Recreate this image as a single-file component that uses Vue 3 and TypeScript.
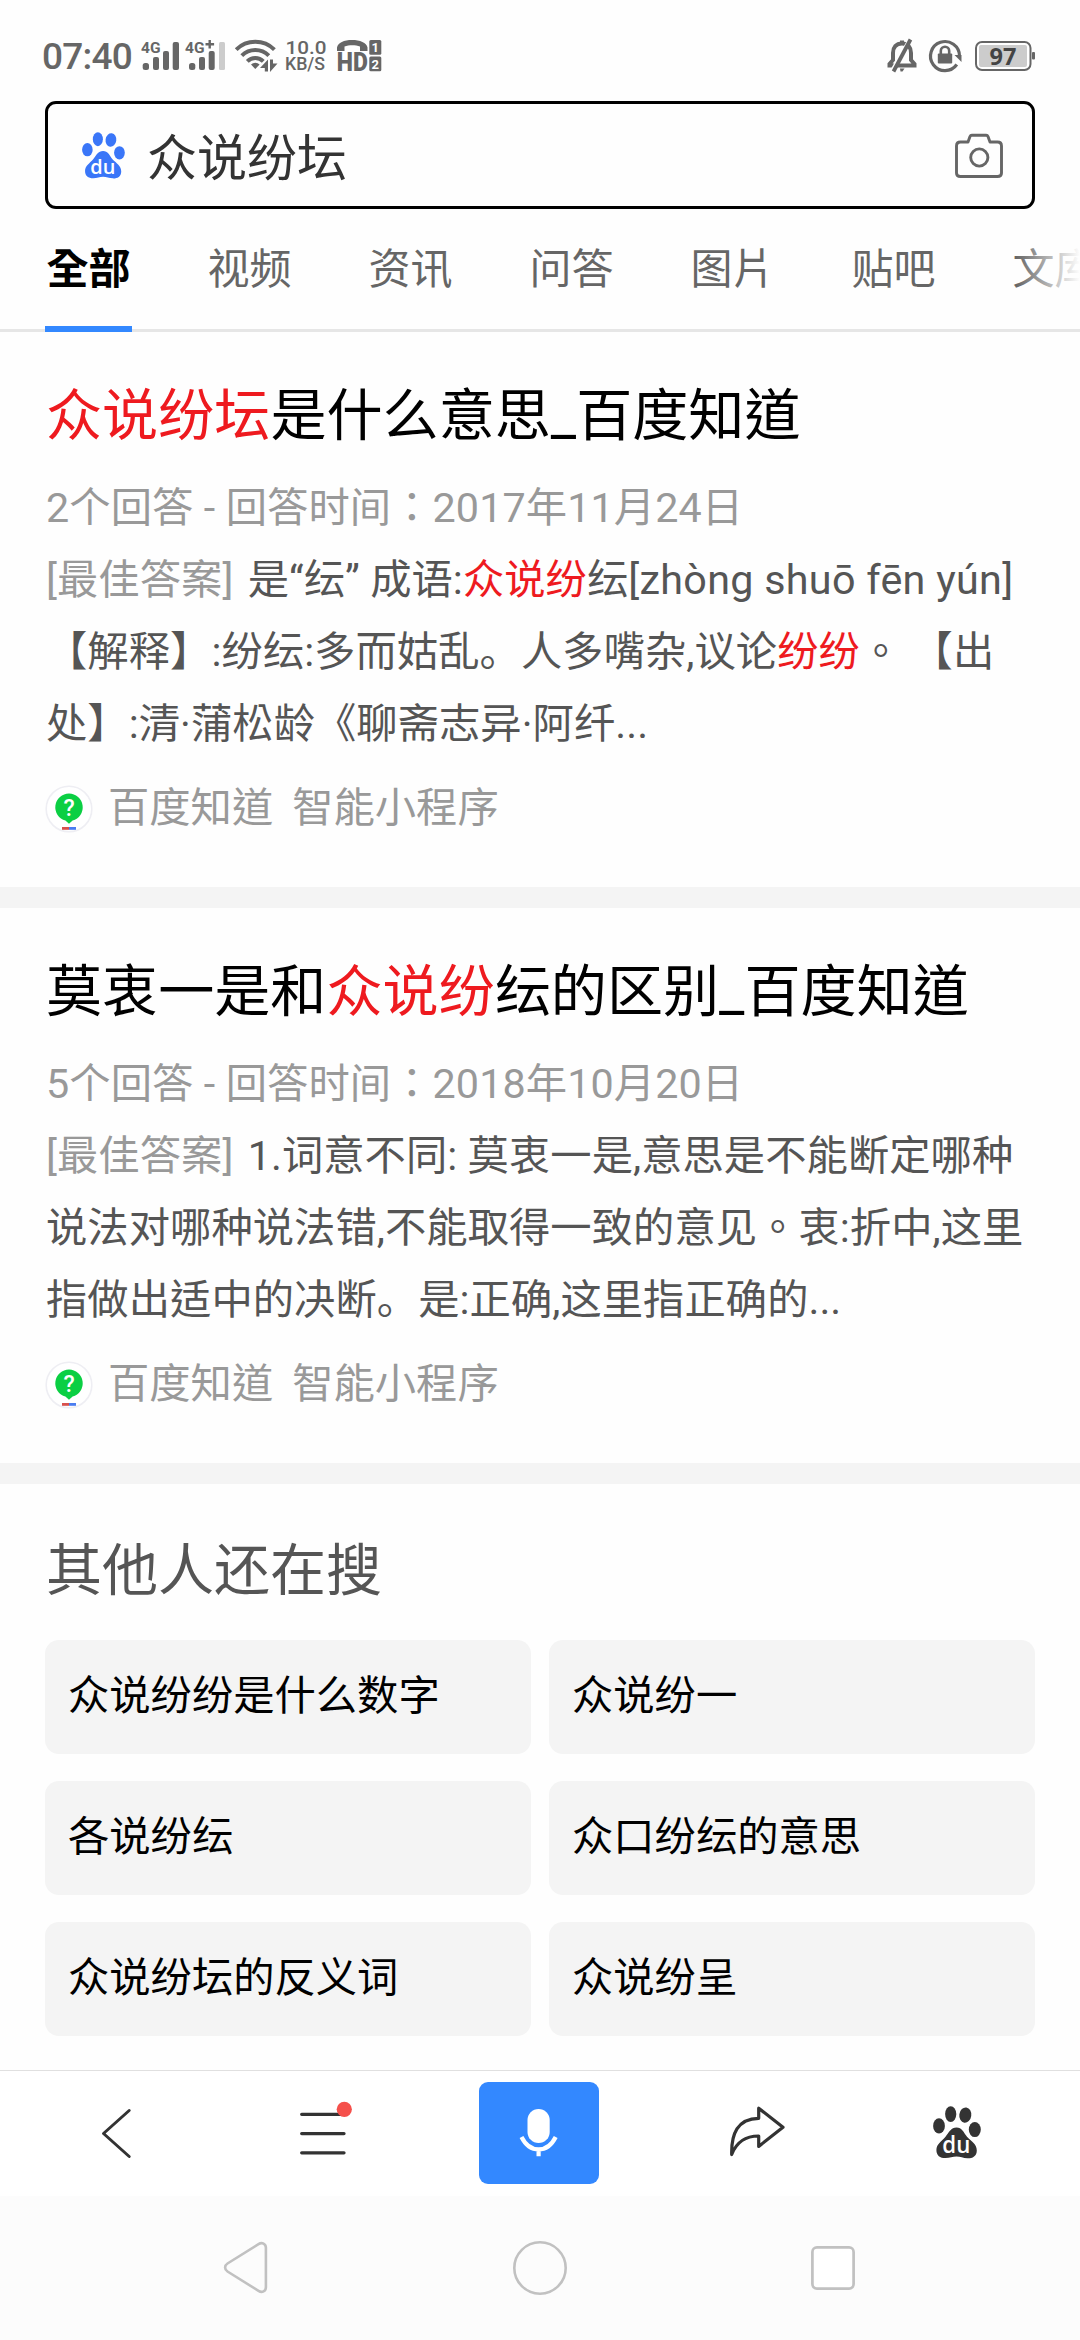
<script setup lang="ts">
interface Part {
  text: string
  tone?: 'hit' | 'soft' | 'sc' | 'jp' | 'latin'
}
interface Result {
  title: Part[]
  meta: string
  lines: Part[][]
}

const query = '众说纷坛'
const tabs: string[] = ['全部', '视频', '资讯', '问答', '图片', '贴吧', '文库']

const results: Result[] = [
  {
    title: [{ text: '众说纷坛', tone: 'hit' }, { text: '是什么意思_百度知道' }],
    meta: '2个回答 - 回答时间：2017年11月24日',
    lines: [
      [
        { text: '[最佳答案]', tone: 'soft' },
        { text: ' 是“纭” 成语:' },
        { text: '众说纷', tone: 'hit' },
        { text: '纭' },
        { text: '[zhòng shuō fēn yún]', tone: 'latin' },
      ],
      [
        { text: '【解释】:纷纭:多而姑' },
        { text: '乱。', tone: 'sc' },
        { text: '人多嘴杂,议论' },
        { text: '纷纷', tone: 'hit' },
        { text: '。 【出' },
      ],
      [{ text: '处', tone: 'jp' }, { text: '】:清·蒲松龄《聊斋志异·阿纤...' }],
    ],
  },
  {
    title: [
      { text: '莫衷一是和' },
      { text: '众说纷', tone: 'hit' },
      { text: '纭的区别_百度知道' },
    ],
    meta: '5个回答 - 回答时间：2018年10月20日',
    lines: [
      [
        { text: '[最佳答案]', tone: 'soft' },
        { text: ' 1.词意不同: 莫衷一是,意思是不能断定哪种' },
      ],
      [{ text: '说法对哪种说法错,不能取得一致的意见。衷:折中,这里' }],
      [
        { text: '指做出适中的决' },
        { text: '断。', tone: 'sc' },
        { text: '是:正确,这里指正确的...' },
      ],
    ],
  },
]

const related: string[] = [
  '众说纷纷是什么数字',
  '众说纷一',
  '各说纷纭',
  '众口纷纭的意思',
  '众说纷坛的反义词',
  '众说纷呈',
]
</script>

<template>
  <div class="screen">
    <header class="status">
      <span class="clock">07:40</span>
      <svg class="signal" width="88" height="34" viewBox="140 38 88 34">
        <g fill="#666">
          <text x="141" y="51.6" class="net" textLength="19.500" lengthAdjust="spacingAndGlyphs">4G</text>
          <rect x="142.7" y="62" width="6.3" height="7" rx="2.5" />
          <rect x="153" y="56" width="6" height="13" rx="2" />
          <rect x="163" y="50" width="6" height="19" rx="2" />
          <rect x="172.7" y="41" width="6.3" height="28" rx="2" />
          <text x="185" y="51.6" class="net" textLength="19.500" lengthAdjust="spacingAndGlyphs">4G</text>
          <path d="M209.7 39v8.4M205.500 43.2h8.600" stroke="#666" stroke-width="2.4" />
          <rect x="189" y="62" width="6.3" height="7" rx="2.5" />
          <rect x="199" y="56" width="6" height="13" rx="2" />
          <rect x="208.7" y="50" width="6" height="19" rx="2" />
        </g>
        <rect x="219" y="41" width="6" height="28" rx="1.5" fill="#ccc" />
      </svg>
      <svg class="wifi" width="46" height="34" viewBox="233 39 46 34">
        <g fill="none" stroke="#666" stroke-width="4">
          <path d="M236.2 49.6a27.2 27.2 0 0 1 38.2 0" />
          <path d="M241.8 55.6a19.2 19.2 0 0 1 27 0" />
          <path d="M247.3 61.4a11.3 11.3 0 0 1 16 0" />
        </g>
        <path d="M251 64.5a6.4 6.4 0 0 1 8.600 0L255.3 69z" fill="#666" />
        <path d="M260 68l8-8.4V71.500h-3.200V68zM270 59.500h3v4h4.500L270 72z" fill="#666" />
      </svg>
      <svg class="rate" width="42" height="34" viewBox="285 38 42 34">
        <g fill="#666" class="rate-text">
          <text x="285.500" y="53.400" textLength="41" lengthAdjust="spacingAndGlyphs">10.0</text>
          <text x="285" y="69.400" textLength="40" lengthAdjust="spacingAndGlyphs">KB/S</text>
        </g>
      </svg>
      <svg class="hd" width="46" height="34" viewBox="336 38 46 34">
        <path d="M337 50v-3.500C338 41.500 344 39 352 39s14.500 2.500 15.500 7.500V50h-7.500v-4.600c-4.500-1.700-11-1.700-15.500 0V50z" fill="#666" />
        <text x="336.800" y="70" class="hd-text" textLength="31" lengthAdjust="spacingAndGlyphs">HD</text>
        <rect x="369.300" y="39" width="12" height="14.800" rx="1.500" fill="#666" />
        <rect x="369.300" y="55.600" width="12" height="14.600" rx="1.500" fill="#666" />
        <text x="375.300" y="51" class="sim">1</text>
        <text x="375.300" y="67.500" class="sim">2</text>
      </svg>
      <svg class="bell" width="32" height="34" viewBox="887 38 32 34">
        <path d="M890.500 64.500v-1.500l3.500-4V52c0-5.500 3-9.500 9-9.500s9 4 9 9.500v7l3.500 4v1.500zM903 42v-2.500" fill="none" stroke="#666" stroke-width="4" />
        <path d="M909.500 40L893 69" stroke="#fff" stroke-width="3" />
        <path d="M911.500 38.500L894.500 70.500" stroke="#666" stroke-width="3.800" />
        <path d="M901 67.500h4.500l-2 3h-2z" fill="#666" />
      </svg>
      <svg class="lock" width="34" height="34" viewBox="929 38 34 34">
        <path d="M957.800 63.500A14.500 14.500 0 1 1 960.500 55" fill="none" stroke="#666" stroke-width="3.200" />
        <path d="M955.500 54h7v7z" fill="#666" />
        <rect x="938.800" y="52.500" width="14.400" height="10" rx="1" fill="#666" />
        <path d="M941.800 53v-3a4.200 4.200 0 0 1 8.400 0v3" fill="none" stroke="#666" stroke-width="2.600" />
      </svg>
      <svg class="battery" width="62" height="32" viewBox="974 39 62 32">
        <rect x="976" y="41" width="54.500" height="28" rx="6" fill="#fff" stroke="#666" stroke-width="2" />
        <rect x="979" y="44" width="48" height="22" rx="2" fill="#ccc" />
        <rect x="1032" y="51" width="3" height="7.500" rx="1" fill="#666" />
        <text x="1003" y="63.800" class="charge">97</text>
      </svg>
    </header>

    <div class="search">
      <svg class="logo" width="43" height="47" viewBox="0 0 48 52.500" preserveAspectRatio="none">
        <g fill="#3a76f8">
          <ellipse cx="6" cy="19.700" rx="5.900" ry="7.500" />
          <ellipse cx="17.700" cy="8" rx="5.600" ry="7.800" />
          <ellipse cx="32.300" cy="9" rx="6" ry="7.600" transform="rotate(8 32.300 9)" />
          <ellipse cx="41.800" cy="23.300" rx="6" ry="7.500" />
          <path d="M23.500 21.300C29 21.300 30.500 26 34 30.500 38.500 35 43.800 38 43.800 44c0 6-4.800 8-9.300 7.800C30 51.500 27.500 50 23.500 50s-6.500 1.600-11 1.600C7 51.600 3.400 49 3.400 43.500c0-5.500 5.100-8.500 9.100-13C16 26 18 21.300 23.500 21.300z" />
        </g>
        <text x="9.300" y="46.700" class="du" textLength="28" lengthAdjust="spacingAndGlyphs">du</text>
      </svg>
      <span class="query">{{ query }}</span>
      <svg class="camera" width="50" height="46" viewBox="953.500 133 50 46">
        <g fill="none" stroke="#666" stroke-width="2.900" stroke-linejoin="round">
          <path d="M960 142h7.500l2-5.500q.5-1.200 1.800-1.200h14.400q1.300 0 1.800 1.200l2 5.500h7.500q4 0 4 4v27q0 3.500-4 3.500h-37q-4 0-4-3.500v-27q0-4 4-4z" />
          <circle cx="978.800" cy="157.500" r="8.600" />
        </g>
      </svg>
    </div>

    <nav class="tabs">
      <span v-for="(tab, i) in tabs" :key="tab" class="tab" :class="{ active: i === 0 }">{{ tab }}</span>
      <i class="fade"></i>
    </nav>

    <main>
      <article v-for="(r, i) in results" :key="i" class="result">
        <h2 class="title">
          <span v-for="(p, k) in r.title" :key="k" :class="p.tone">{{ p.text }}</span>
        </h2>
        <p class="meta">{{ r.meta }}</p>
        <p v-for="(line, n) in r.lines" :key="n" class="line">
          <span v-for="(p, k) in line" :key="k" :class="p.tone">{{ p.text }}</span>
        </p>
        <div class="source">
          <svg width="48" height="48" viewBox="0 0 48 48">
            <circle cx="24" cy="24" r="22.800" fill="#fff" stroke="#eeeef3" stroke-width="1.600" />
            <path d="M24 8.500a13.800 13.800 0 0 1 3.600 27.100L24 38.800l-3.600-3.200A13.800 13.800 0 0 1 24 8.500z" fill="#0bcf43" />
            <text x="24" y="30.500" class="mark">?</text>
            <rect x="17" y="42" width="7" height="2.800" fill="#d8504c" />
            <rect x="24" y="42" width="7" height="2.800" fill="#4a7cf0" />
          </svg>
          <span class="site">百度知道</span>
          <span class="site">智能小程序</span>
        </div>
      </article>

      <section class="related">
        <h3>其他人还在搜</h3>
        <div class="grid">
          <a v-for="item in related" :key="item" class="pill">{{ item }}</a>
        </div>
      </section>
    </main>

    <footer class="toolbar">
      <svg width="34" height="54" viewBox="99 2105 34 54">
        <path d="M129.200 2109.500L103.500 2132.500l25.700 23" fill="none" stroke="#333" stroke-width="3" stroke-linecap="round" stroke-linejoin="round" />
      </svg>
      <svg class="menu" width="56" height="60" viewBox="298 2099 56 60">
        <path d="M301.700 2114.300h42.300M301.700 2133.600h42.300M301.700 2152.800h42.300" stroke="#333" stroke-width="3.300" stroke-linecap="round" />
        <circle cx="344.300" cy="2109.300" r="7.600" fill="#f5504b" />
      </svg>
      <button class="mic" type="button">
        <svg width="42" height="52" viewBox="518 2107 42 52">
          <rect x="527.500" y="2109" width="22.200" height="34" rx="11.100" fill="#fff" />
          <path d="M521.500 2137c4 8 10.500 12.400 17.100 12.400s13.100-4.400 17.100-12.400M538.600 2149v7.300" fill="none" stroke="#fff" stroke-width="4.200" />
        </svg>
      </button>
      <svg class="share" width="58" height="56" viewBox="728 2106 58 56">
        <path d="M758.700 2109.200l24.300 19-24.300 19.200v-10.400c-13 0-22 5.500-27 18.500-.5-20 5.500-36 27-36.200z" fill="none" stroke="#333" stroke-width="3.200" stroke-linejoin="round" />
      </svg>
      <svg class="paw" width="48" height="53" viewBox="0 0 48 52.500" preserveAspectRatio="none">
        <g fill="#333">
          <ellipse cx="6" cy="19.700" rx="5.900" ry="7.500" />
          <ellipse cx="17.700" cy="8" rx="5.600" ry="7.800" />
          <ellipse cx="32.300" cy="9" rx="6" ry="7.600" transform="rotate(8 32.300 9)" />
          <ellipse cx="41.800" cy="23.300" rx="6" ry="7.500" />
          <path d="M23.500 21.300C29 21.300 30.500 26 34 30.500 38.500 35 43.800 38 43.800 44c0 6-4.800 8-9.300 7.800C30 51.500 27.500 50 23.500 50s-6.500 1.600-11 1.600C7 51.600 3.400 49 3.400 43.500c0-5.500 5.100-8.500 9.100-13C16 26 18 21.300 23.500 21.300z" />
        </g>
        <text x="9.300" y="46.700" class="du" textLength="28" lengthAdjust="spacingAndGlyphs">du</text>
      </svg>
    </footer>

    <div class="system">
      <svg width="48" height="56" viewBox="222 2240 48 56">
        <path d="M258.500 2244.200c3.500-2.200 7.400-.6 7.400 3.600v39.400c0 4.200-3.900 5.800-7.400 3.600l-31-19.300c-3.200-2-3.200-6 0-8z" fill="none" stroke="#c1c1c1" stroke-width="2.600" />
      </svg>
      <svg width="56" height="56" viewBox="0 0 56 56">
        <circle cx="28" cy="28" r="25.700" fill="none" stroke="#c1c1c1" stroke-width="2.600" />
      </svg>
      <svg width="46" height="46" viewBox="0 0 46 46">
        <rect x="2.400" y="2.400" width="41.200" height="41.200" rx="4.500" fill="#fff" stroke="#c1c1c1" stroke-width="2.700" />
      </svg>
    </div>
  </div>
</template>

<style>
body {
  margin: 0;
  background: #fff;
}
</style>

<style scoped>
.screen {
  display: flex;
  flex-direction: column;
  width: 1080px;
  height: 2340px;
  overflow: hidden;
  background: #fefefe;
  font-family: Roboto, 'Noto Sans CJK TC', sans-serif;
  font-size: 41.3px;
  color: #555;
}
svg {
  display: block;
  flex: none;
  overflow: visible;
}
h2,
h3,
p {
  margin: 0;
  font-weight: 400;
}

.status {
  display: flex;
  align-items: center;
  height: 101px;
  box-sizing: border-box;
  padding: 10px 44px 0 42px;
}
.clock {
  width: 98px;
  padding-top: 2px;
  font-size: 37px;
  font-weight: 500;
  line-height: 40px;
  letter-spacing: -0.8px;
  color: #666;
  white-space: nowrap;
}
.net {
  font-size: 15.5px;
  font-weight: 700;
}
.wifi {
  margin-left: 5px;
}
.rate {
  margin-left: 6px;
}
.rate-text {
  font-size: 19px;
  font-weight: 500;
}
.hd {
  margin-left: 9px;
}
.hd-text {
  font-size: 25px;
  font-weight: 900;
  fill: #666;
}
.sim {
  font-size: 13px;
  font-weight: 700;
  fill: #fff;
  text-anchor: middle;
}
.bell {
  margin-left: auto;
}
.lock {
  margin-left: 10px;
}
.battery {
  margin-left: 12px;
}
.charge {
  font-family: 'Noto Sans', sans-serif;
  font-size: 23.5px;
  font-weight: 700;
  fill: #444;
  text-anchor: middle;
}

.search {
  display: flex;
  align-items: center;
  height: 108px;
  margin: 0 45px;
  box-sizing: border-box;
  padding: 0 28px 0 34px;
  border: 3px solid #000;
  border-radius: 11px;
}
.du {
  font-family: 'Open Sans', sans-serif;
  font-size: 23px;
  font-weight: 600;
  fill: #fff;
}
.query {
  flex: 1;
  margin-left: 22px;
  font-size: 50px;
  line-height: 70px;
  margin-top: 7px;
  color: #333;
}
.camera {
  margin-top: 2px;
}

.tabs {
  position: relative;
  display: flex;
  gap: 74px;
  height: 123px;
  box-sizing: border-box;
  padding-left: 45px;
  border-bottom: 3px solid #e6e6e6;
}
.tab {
  flex: none;
  width: 87px;
  height: 123px;
  box-sizing: border-box;
  font-size: 42px;
  line-height: 122px;
  text-align: center;
  color: #666;
}
.tab.active {
  border-bottom: 6px solid #3388ff;
  font-weight: 700;
  color: #000;
}
.fade {
  position: absolute;
  top: 10px;
  right: 0;
  width: 64px;
  height: 105px;
  background: linear-gradient(90deg, rgba(254, 254, 254, 0), #fefefe);
}

.result {
  height: 576px;
  box-sizing: border-box;
  padding: 45px 45px 0 46px;
  border-bottom: 21px solid #f4f4f4;
}
.title {
  font-size: 56.1px;
  line-height: 78px;
  color: #000;
  white-space: pre;
}
.meta {
  margin-top: 17px;
  line-height: 72px;
  letter-spacing: 0.09px;
  color: #999;
  white-space: pre;
}
.line {
  line-height: 72px;
  letter-spacing: 0.05px;
  white-space: pre;
}
.hit {
  color: #ee1a1f;
}
.soft {
  margin-right: 4px;
  color: #999;
}
.latin {
  letter-spacing: 0.28px;
}
.sc {
  font-family: Roboto, 'Noto Sans CJK SC', sans-serif;
}
.jp {
  font-family: Roboto, 'Noto Sans CJK JP', sans-serif;
}
.source {
  display: flex;
  align-items: center;
  height: 48px;
  margin-top: 25px;
  margin-left: -1px;
  color: #999;
}
.mark {
  font-size: 23px;
  font-weight: 500;
  fill: #fff;
  text-anchor: middle;
}
.site {
  margin-left: 15px;
  line-height: 46px;
  padding-bottom: 2px;
}
.site + .site {
  margin-left: 19px;
}

.related {
  padding: 48px 45px 0;
}
.related h3 {
  font-size: 56px;
  line-height: 78px;
  padding-left: 1px;
  color: #555;
}
.grid {
  display: grid;
  grid-template-columns: 486px 486px;
  gap: 27px 18px;
  margin-top: 30px;
}
.pill {
  height: 114px;
  box-sizing: border-box;
  padding-left: 23px;
  border-radius: 14px;
  background: #f4f4f4;
  line-height: 112px;
  color: #000;
}
main {
  height: 1738px;
  flex: none;
}

.toolbar {
  display: flex;
  align-items: center;
  flex: none;
  height: 126px;
  box-sizing: border-box;
  padding: 0 99px 2px;
  border-top: 1px solid #e0e0e0;
  background: #fff;
}
.menu {
  margin-left: 165px;
  margin-bottom: 7px;
}
.mic {
  display: flex;
  align-items: center;
  justify-content: center;
  width: 120px;
  height: 102px;
  margin: 0 0 0 125px;
  padding: 0;
  border: 0;
  border-radius: 9px;
  background: #3388ff;
}
.share {
  margin-left: 129px;
}
.paw {
  margin-left: 147px;
}

.system {
  display: flex;
  align-items: center;
  flex: none;
  height: 144px;
  box-sizing: border-box;
  padding-left: 222px;
  gap: 242px;
  background: #fcfcfc;
}
</style>
